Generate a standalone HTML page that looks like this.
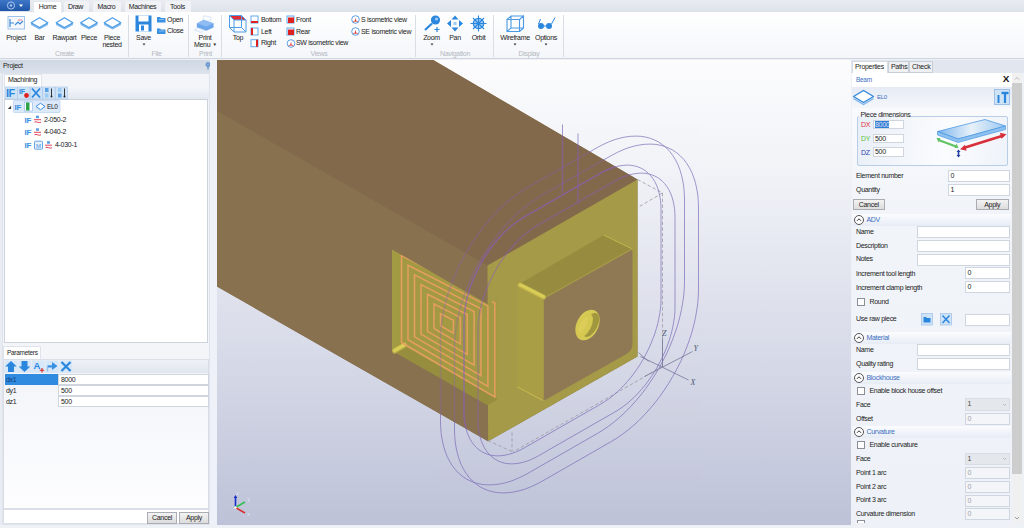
<!DOCTYPE html>
<html><head><meta charset="utf-8"><title>CAD</title>
<style>
html,body{margin:0;padding:0}
body{width:1024px;height:528px;position:relative;overflow:hidden;background:#eef1f6;font-family:"Liberation Sans",sans-serif;font-size:7px;letter-spacing:-0.3px;color:#222}
div{position:absolute;box-sizing:border-box}
.t{height:10px;line-height:10px;white-space:nowrap}
.c{text-align:center}
.g{color:#b4b8c0}
.b{color:#3b6fc0}
.in{background:#fff;border:1px solid #d0d6e0;height:11px;line-height:9px;padding-left:2px;white-space:nowrap}
.dis{background:#f4f5f8;color:#9a9ea6}
.cb{background:#e4e7ec;border:1px solid #d9dde3;color:#444}
.btn{background:linear-gradient(#f3f3f3,#dcdcdc);border:1px solid #a9adb3;text-align:center;line-height:10px;height:12px}
.sep{width:1px;background:#d9dde5;top:15px;height:42px}
.hd{left:852px;width:159px;height:12px;background:linear-gradient(#fbfcfe,#e7ecf5)}
.circ{width:10px;height:10px;border:1px solid #555;border-radius:50%;background:#fff}
.chk{width:8px;height:8px;border:1px solid #8a8f98;background:#fff}
svg{position:absolute;overflow:visible}
</style></head><body>

<div style="left:0;top:0;width:1024px;height:12px;background:linear-gradient(#e9ecf1,#dde2ea)"></div>
<div style="left:0;top:12px;width:1024px;height:47px;background:linear-gradient(#ffffff,#f4f6fa);border-bottom:1px solid #cfd5de"></div>
<div style="left:0;top:0;width:30px;height:11px;background:linear-gradient(#3f77c8,#1f56a8);border-radius:0 0 2px 0"></div>
<svg style="left:0;top:0" width="30" height="11"><circle cx="11" cy="5.5" r="3.6" fill="none" stroke="#a9c7ee" stroke-width="1"/><circle cx="11" cy="5.5" r="1.2" fill="#a9c7ee"/><path d="M19 4.5h4l-2 2.6z" fill="#fff"/></svg>
<div style="left:33px;top:1px;width:29px;height:12px;background:#fff;border:1px solid #e3e7ee;border-bottom:none;border-radius:2px 2px 0 0"></div>
<div style="left:63.5px;top:1px;width:25px;height:11px;background:#f0f2f6;border-radius:2px 2px 0 0"></div>
<div style="left:92.5px;top:1px;width:28px;height:11px;background:#f0f2f6;border-radius:2px 2px 0 0"></div>
<div style="left:124.5px;top:1px;width:36px;height:11px;background:#f0f2f6;border-radius:2px 2px 0 0"></div>
<div style="left:164.5px;top:1px;width:26px;height:11px;background:#f0f2f6;border-radius:2px 2px 0 0"></div>
<div class="t c" style="left:33px;top:1.5px;width:29px;">Home</div>
<div class="t c" style="left:61px;top:1.5px;width:29px;">Draw</div>
<div class="t c" style="left:92px;top:1.5px;width:29px;">Macro</div>
<div class="t c" style="left:123px;top:1.5px;width:39px;">Machines</div>
<div class="t c" style="left:163px;top:1.5px;width:29px;">Tools</div>
<div class="t c" style="left:-14px;top:32.5px;width:60px;">Project</div>
<div class="t c" style="left:9.5px;top:32.5px;width:60px;">Bar</div>
<div class="t c" style="left:34.5px;top:32.5px;width:60px;">Rawpart</div>
<div class="t c" style="left:59px;top:32.5px;width:60px;">Piece</div>
<div class="t c" style="left:82px;top:32.5px;width:60px;">Piece</div>
<div class="t c" style="left:82px;top:39.5px;width:60px;">nested</div>
<div class="t c" style="left:113.5px;top:32.5px;width:60px;">Save</div>
<svg style="left:141.5px;top:42.5px" width="4" height="3"><path d="M.6 .5h2.8L2 2.6z" fill="#333"/></svg>
<div class="t c" style="left:175px;top:32.5px;width:60px;">Print</div>
<div class="t c" style="left:175px;top:39.5px;width:60px;">Menu <span style="font-size:4.5px;position:relative;top:-.500px;left:.500px">&#9660;</span></div>
<div class="t c" style="left:208px;top:32.5px;width:60px;">Top</div>
<div class="t c" style="left:401.5px;top:32.5px;width:60px;">Zoom</div>
<svg style="left:429.5px;top:42.5px" width="4" height="3"><path d="M.6 .5h2.8L2 2.6z" fill="#333"/></svg>
<div class="t c" style="left:425px;top:32.5px;width:60px;">Pan</div>
<div class="t c" style="left:448.5px;top:32.5px;width:60px;">Orbit</div>
<div class="t c" style="left:485px;top:32.5px;width:60px;">Wireframe</div>
<svg style="left:513px;top:42.5px" width="4" height="3"><path d="M.6 .5h2.8L2 2.6z" fill="#333"/></svg>
<div class="t c" style="left:516px;top:32.5px;width:60px;">Options</div>
<svg style="left:544px;top:42.5px" width="4" height="3"><path d="M.6 .5h2.8L2 2.6z" fill="#333"/></svg>
<div class="t c g" style="left:34.5px;top:49px;width:60px;">Create</div>
<div class="t c g" style="left:126.5px;top:49px;width:60px;">File</div>
<div class="t c g" style="left:175.5px;top:49px;width:60px;">Print</div>
<div class="t c g" style="left:289px;top:49px;width:60px;">Views</div>
<div class="t c g" style="left:425px;top:49px;width:60px;">Navigation</div>
<div class="t c g" style="left:499px;top:49px;width:60px;">Display</div>
<div class="sep" style="left:127.5px"></div>
<div class="sep" style="left:188px"></div>
<div class="sep" style="left:221px"></div>
<div class="sep" style="left:415px"></div>
<div class="sep" style="left:492.5px"></div>
<div class="sep" style="left:562.5px"></div>
<div class="t " style="left:167px;top:14.5px;">Open</div>
<div class="t " style="left:167px;top:26.3px;">Close</div>
<div class="t " style="left:261px;top:14.600000000000001px;">Bottom</div>
<div class="t " style="left:261px;top:26.5px;">Left</div>
<div class="t " style="left:261px;top:38.2px;">Right</div>
<div class="t " style="left:296px;top:14.600000000000001px;">Front</div>
<div class="t " style="left:296px;top:26.5px;">Rear</div>
<div class="t " style="left:296px;top:38.2px;">SW isometric view</div>
<div class="t " style="left:361px;top:14.600000000000001px;">S isometric view</div>
<div class="t " style="left:361px;top:26.5px;">SE isometric view</div>
<svg style="left:0;top:0" width="1024" height="60" viewBox="0 0 1024 60">
<rect x="8" y="16.5" width="16.5" height="12.5" fill="#f4f8fd" stroke="#9fc3ea" stroke-width="1"/><path d="M10 19v8M10 23h4M15 25l3-3 2 2 3-3" stroke="#3d8ad8" stroke-width="1.2" fill="none"/><path d="M18 20h4" stroke="#e57a7a" stroke-width="1"/>
<path d="M31.1 22.7L39.5 27.4L47.9 22.7V24.9L39.5 29.6L31.1 24.9Z" fill="#7db7ee"/>
<path d="M31.1 22.7 L39.5 17.8 L47.9 22.7 L39.5 27.4Z" fill="#fdfeff" stroke="#4a9be6" stroke-width="1.1" stroke-linejoin="round"/>
<path d="M56.1 22.7L64.5 27.4L72.9 22.7V24.9L64.5 29.6L56.1 24.9Z" fill="#7db7ee"/>
<path d="M56.1 22.7 L64.5 17.8 L72.9 22.7 L64.5 27.4Z" fill="#fdfeff" stroke="#4a9be6" stroke-width="1.1" stroke-linejoin="round"/>
<path d="M80.6 22.7L89 27.4L97.4 22.7V24.9L89 29.6L80.6 24.9Z" fill="#7db7ee"/>
<path d="M80.6 22.7 L89 17.8 L97.4 22.7 L89 27.4Z" fill="#fdfeff" stroke="#4a9be6" stroke-width="1.1" stroke-linejoin="round"/>
<path d="M104.1 22.7L112.5 27.4L120.9 22.7V24.9L112.5 29.6L104.1 24.9Z" fill="#7db7ee"/>
<path d="M104.1 22.7 L112.5 17.8 L120.9 22.7 L112.5 27.4Z" fill="#fdfeff" stroke="#4a9be6" stroke-width="1.1" stroke-linejoin="round"/>
<path d="M135.5 15.5h16v16h-16z" fill="#2b87dd"/><rect x="138.5" y="15.5" width="10" height="6" fill="#fff"/><rect x="139" y="24.5" width="9.5" height="7" fill="#fff"/><rect x="141" y="25.5" width="3" height="5" fill="#2b87dd"/>
<path d="M157 17h3l1 1h4.5v4.5h-8.5z" fill="#3a90e2"/><path d="M157 28.5h3l1 1h4.5v4.5h-8.5z" fill="#3a90e2"/><path d="M159 19.5h5M159 31h5" stroke="#9ccbf5" stroke-width=".8"/>
<path d="M203 20l.800-4.2 7.2 1.2-.500 4z" fill="#fbfdff" stroke="#c5daf2" stroke-width=".6"/>
<path d="M196.8 23.5l6.5-3.5 10.3 3.2v4.3l-7.3 3.3-9.5-3.3z" fill="#6ea6ec"/>
<path d="M196.8 23.5l6.5-3.5 10.3 3.2-7.3 3.3z" fill="#8fbcf2"/>
<path d="M197.5 27.8l6.8 2.4-3 2.3-7-2.3z" fill="#f2f7fd" stroke="#c5daf2" stroke-width=".6"/>
<path d="M229.5 15.5h12l4.5 4.5h-12z" fill="#e02c34"/><path d="M229.5 15.5h12v12h-12zM234 20h12v12h-12zM229.5 15.5l4.5 4.5M241.5 15.5l4.5 4.5M229.5 27.5l4.5 4.5M241.5 27.5l4.5 4.5" fill="none" stroke="#4f9fe8" stroke-width="1"/>
<rect x="251" y="16" width="7" height="7" fill="#fff" stroke="#62a9ec" stroke-width="1"/>
<rect x="251" y="21" width="7" height="2" fill="#dd2222"/>
<rect x="251" y="28" width="7" height="7" fill="#fff" stroke="#62a9ec" stroke-width="1"/>
<rect x="251" y="28" width="2" height="7" fill="#dd2222"/>
<rect x="251" y="39.7" width="7" height="7" fill="#fff" stroke="#62a9ec" stroke-width="1"/>
<rect x="256" y="39.7" width="2" height="7" fill="#dd2222"/>
<rect x="287" y="16" width="7" height="7" fill="#fff" stroke="#62a9ec" stroke-width="1"/>
<rect x="288" y="17.5" width="6" height="5.5" fill="#dd2222"/>
<rect x="287" y="28" width="7" height="7" fill="#fff" stroke="#62a9ec" stroke-width="1"/>
<rect x="288" y="29.5" width="6" height="5.5" fill="#dd2222"/>
<circle cx="291" cy="43.5" r="3.8" fill="#fff" stroke="#5a9fe6" stroke-width="1"/><path d="M291 42.5v3.5M291 44.5l-2.5 1.5M291 44.5l2.5 1.5" stroke="#d33" stroke-width=".8" fill="none"/>
<circle cx="355.5" cy="19.5" r="3.8" fill="#fff" stroke="#5a9fe6" stroke-width="1"/><path d="M355.5 18.5v3.5M355.5 20.5l-2.5 1.5M355.5 20.5l2.5 1.5" stroke="#d33" stroke-width=".8" fill="none"/>
<circle cx="355.5" cy="31.5" r="3.8" fill="#fff" stroke="#5a9fe6" stroke-width="1"/><path d="M355.5 30.5v3.5M355.5 32.5l-2.5 1.5M355.5 32.5l2.5 1.5" stroke="#d33" stroke-width=".8" fill="none"/>
<circle cx="435.5" cy="20" r="4.6" fill="#2b87dd"/><circle cx="436.5" cy="19" r="1.6" fill="#9ccbf5"/><path d="M432 23.5l-7 6.5" stroke="#2b87dd" stroke-width="2.2"/><path d="M437 27v5M434.5 29.5h5" stroke="#2b87dd" stroke-width="1.2"/>
<path d="M455 15.5l3.5 4h-7zM455 31.5l3.5-4h-7zM447 23.5l4-3.5v7zM463 23.5l-4-3.5v7z" fill="#2b87dd"/><rect x="453.5" y="22" width="3" height="3" fill="#9ccbf5"/>
<circle cx="478.5" cy="23.5" r="5.2" fill="#9ccbf5" stroke="#2b87dd" stroke-width="1.2"/><path d="M478.5 15.5v16M470.5 23.5h16M473 18l11 11M484 18l-11 11" stroke="#2b87dd" stroke-width="1.1"/>
<path d="M507 19.5h12.5v12H507zM519.5 19.5L523.5 16v12l-4 3.5M511 16v12h12.5M511 28l-4 3.5M507 19.5l4-3.5h12.5" fill="none" stroke="#4a9ae6" stroke-width="1.1"/>
<circle cx="541" cy="26" r="3" fill="#2b87dd"/><circle cx="549" cy="26" r="3" fill="#2b87dd"/><path d="M538.5 24l2-5M551.5 24l3.5-6.5M544 26h2" stroke="#2b87dd" stroke-width="1" fill="none"/>
</svg>
<div style="left:0;top:59.5px;width:213px;height:13px;background:linear-gradient(#cfd7e3,#dbe2ec)"></div>
<div class="t " style="left:3px;top:60.5px;">Project</div>
<svg style="left:205px;top:62px" width="6" height="8"><circle cx="3" cy="2.6" r="2" fill="#7fa8dc" stroke="#4d7fc0" stroke-width=".8"/><path d="M3 4.5v3" stroke="#4d7fc0" stroke-width="1"/></svg>
<div style="left:0;top:72.5px;width:213px;height:456px;background:#e9edf3"></div>
<div style="left:2px;top:72.5px;width:208px;height:452px;background:#f3f5f9;border:1px solid #dfe4ec"></div>
<div style="left:4px;top:73.5px;width:38px;height:14px;background:#fff;border:1px solid #dfe4ec;border-bottom:none"></div>
<div class="t " style="left:8px;top:75px;">Machining</div>
<div style="left:4px;top:87px;width:205px;height:12px;background:linear-gradient(#f4f6fa,#e3e8f0)"></div>
<div style="left:4px;top:99px;width:204px;height:244px;background:#fff;border:1px solid #cdd3dd"></div>
<svg style="left:0;top:0" width="216" height="528" viewBox="0 0 216 528">
<rect x="5" y="87" width="12.3" height="12" fill="#cfe3f7" stroke="#a9c6e6" stroke-width=".6"/>
<rect x="17.6" y="87" width="12.3" height="12" fill="#cfe3f7" stroke="#a9c6e6" stroke-width=".6"/>
<rect x="30.2" y="87" width="12.3" height="12" fill="#cfe3f7" stroke="#a9c6e6" stroke-width=".6"/>
<rect x="42.8" y="87" width="12.3" height="12" fill="#cfe3f7" stroke="#a9c6e6" stroke-width=".6"/>
<rect x="55.4" y="87" width="12.3" height="12" fill="#cfe3f7" stroke="#a9c6e6" stroke-width=".6"/>
<text x="6" y="97" font-size="11" font-weight="bold" fill="#2b87dd" letter-spacing="-.5">IF</text>
<text x="19" y="94" font-size="7" font-weight="bold" fill="#2b87dd" letter-spacing="-.3">IF</text><circle cx="26.5" cy="95.5" r="2.4" fill="#e02020"/>
<path d="M32 88.5l8 9M40 88.5l-8 9" stroke="#2b87dd" stroke-width="1.8"/>
<path d="M51.5 88.5v8" stroke="#222" stroke-width=".9"/><circle cx="51.5" cy="96.5" r="1" fill="#222"/><rect x="45" y="88" width="3.5" height="4" fill="#5aa0e6"/><rect x="45" y="93.5" width="3.5" height="4" fill="#9ccbf5"/>
<path d="M64.5 88.5v8" stroke="#222" stroke-width=".9"/><circle cx="64.5" cy="96.5" r="1" fill="#222"/><rect x="58" y="88" width="3.5" height="4" fill="#9ccbf5"/><rect x="58" y="93.5" width="3.5" height="4" fill="#5aa0e6"/>
<path d="M7.8 109l3.3-3.3v3.3z" fill="#333"/>
<rect x="13.5" y="100.5" width="46.5" height="12" rx="1" fill="#dbe9fb" stroke="#b7d0f0" stroke-width=".7"/>
<text x="14.5" y="110" font-size="8" font-weight="bold" fill="#3c8fe0" letter-spacing="-.3">IF</text>
<rect x="24.5" y="102" width="8" height="9" fill="#fff" stroke="#8ab6e6" stroke-width=".6"/><rect x="26" y="102.5" width="3.5" height="8" fill="#2ea44a"/>
<path d="M36 106.5l4.5-3.2 4.5 3.2-4.5 3.2z" fill="#fff" stroke="#3c8fe0" stroke-width="1"/>
<text x="24.5" y="122.7" font-size="8" font-weight="bold" fill="#3c8fe0" letter-spacing="-.3">IF</text>
<rect x="36" y="115.7" width="3" height="2.5" fill="#5aa0e6"/><path d="M34 119.7h7M34.5 122.2c2-1.5 4 1.5 6.5 0" stroke="#e0425a" stroke-width="1" fill="none"/>
<text x="24.5" y="135.3" font-size="8" font-weight="bold" fill="#3c8fe0" letter-spacing="-.3">IF</text>
<rect x="36" y="128.3" width="3" height="2.5" fill="#5aa0e6"/><path d="M34 132.3h7M34.5 134.8c2-1.5 4 1.5 6.5 0" stroke="#e0425a" stroke-width="1" fill="none"/>
<text x="24.5" y="148.2" font-size="8" font-weight="bold" fill="#3c8fe0" letter-spacing="-.3">IF</text>
<rect x="47" y="141.2" width="3" height="2.5" fill="#5aa0e6"/><path d="M45 145.2h7M45.5 147.7c2-1.5 4 1.5 6.5 0" stroke="#e0425a" stroke-width="1" fill="none"/>
<rect x="34.5" y="141.2" width="8" height="8" rx="1" fill="#eaf3fd" stroke="#3c8fe0" stroke-width=".8"/><text x="36" y="147.7" font-size="6" fill="#3c8fe0">M</text>
</svg>
<div class="t " style="left:47px;top:101.5px;font-size:6.5px">EL0</div>
<div class="t " style="left:44px;top:114.7px;">2-050-2</div>
<div class="t " style="left:44px;top:127.30000000000001px;">4-040-2</div>
<div class="t " style="left:55px;top:140.2px;">4-030-1</div>
<div style="left:3px;top:346px;width:38px;height:13px;background:#fff;border:1px solid #dfe4ec;border-bottom:none"></div>
<div class="t " style="left:7px;top:347.5px;font-size:6.5px">Parameters</div>
<div style="left:3px;top:359px;width:206px;height:150px;background:linear-gradient(#f1f4f9,#fdfdfe);border:1px solid #d9dee7"></div>
<div style="left:4px;top:360px;width:204px;height:13px;background:linear-gradient(#eef1f6,#e1e6ee)"></div>
<div style="left:3px;top:509px;width:206px;height:15px;background:#fff;border:1px solid #d9dee7"></div>
<div style="left:5px;top:373.5px;width:53px;height:11px;background:#2f8be0"></div>
<div class="t " style="left:6px;top:374.5px;color:#173a78">dx1</div>
<div class="t " style="left:6px;top:385.5px;">dy1</div>
<div class="t " style="left:6px;top:396.5px;">dz1</div>
<div class="in" style="left:58px;top:373.5px;width:150.5px;height:11px">8000</div>
<div class="in" style="left:58px;top:384.5px;width:150.5px;height:11px">500</div>
<div class="in" style="left:58px;top:395.5px;width:150.5px;height:11px">500</div>
<svg style="left:0;top:355px" width="216" height="20" viewBox="0 355 216 20">
<rect x="5" y="360.5" width="12.5" height="12" fill="#d6e7f9"/>
<rect x="18.5" y="360.5" width="12.5" height="12" fill="#d6e7f9"/>
<rect x="32" y="360.5" width="12.5" height="12" fill="#d6e7f9"/>
<rect x="45.5" y="360.5" width="12.5" height="12" fill="#d6e7f9"/>
<rect x="59.5" y="360.5" width="12.5" height="12" fill="#d6e7f9"/>
<path d="M11 361l5.8 5.5h-2.8v5.5h-6v-5.5h-2.8z" fill="#2b87dd"/>
<path d="M24.5 372l5.8-5.5h-2.8v-5.5h-6v5.5h-2.8z" fill="#2b87dd"/>
<text x="33.5" y="369" font-size="9.5" font-weight="bold" fill="#2b87dd">A</text><path d="M42 368v4.4M39.8 370.2h4.4" stroke="#d22" stroke-width="1.1"/>
<path d="M47.5 371.5v-5.5h5" stroke="#8fc0f0" stroke-width="1.3" fill="none"/><path d="M52 362l5.5 4-5.5 4z" fill="#3a90e2"/><path d="M48 366.5h5" stroke="#3a90e2" stroke-width="2"/>
<path d="M61.5 362l9 9M70.5 362l-9 9" stroke="#2b87dd" stroke-width="2.2"/>
</svg>
<div class="btn" style="left:147px;top:511.5px;width:30px">Cancel</div>
<div class="btn" style="left:179px;top:511.5px;width:30px">Apply</div>
<div style="left:210px;top:59.5px;width:7px;height:469px;background:#eef1f7"></div>
<div style="left:216.5px;top:59.5px;width:634.5px;height:465px;background:linear-gradient(#fcfcfd 0%,#f0f2f7 25%,#d9dce9 60%,#bec2d8 100%)"></div>
<div style="left:0px;top:524.5px;width:1024px;height:4px;background:#eef1f6"></div>
<svg style="left:216.5px;top:59.5px" width="634.5" height="465" viewBox="216.5 59.5 634.5 465">
<defs><clipPath id="vp"><rect x="216.5" y="59.5" width="634.5" height="465"/></clipPath>
<clipPath id="pk"><polygon points="391.5,249 487,303.6 497,297.9 497,398.9 487,404.6 391.5,350"/></clipPath>
<linearGradient id="hl" x1="0" y1="0" x2="1" y2="0"><stop offset="0" stop-color="#b9ab45"/><stop offset=".5" stop-color="#e2d45a"/><stop offset="1" stop-color="#a89c44"/></linearGradient>
<radialGradient id="hole" cx=".3" cy=".55" r=".8"><stop offset="0" stop-color="#e4d25a"/><stop offset=".6" stop-color="#c6b547"/><stop offset="1" stop-color="#9c8f3d"/></radialGradient>
<clipPath id="inb"><polygon points="216.5,59.5 432.7,59.5 637,179 637,356 487.6,440.8 216.5,286"/></clipPath>
<clipPath id="outb"><path clip-rule="evenodd" d="M216.5 59.5H851V524.5H216.5Z M216.5 59.5 L432.7 59.5 L637 179 L637 356 L487.6 440.8 L216.5 286Z"/></clipPath>
</defs>
<g clip-path="url(#vp)">
<polygon points="216.5,59.5 432.7,59.5 637,179 637,356 487.6,440.8 216.5,286" fill="#88714f"/>
<polygon points="216.5,59.5 432.7,59.5 637,179 487,265 216.5,110.4" fill="#83694c"/>
<polygon points="216.5,110.9 487,265.5 487.6,440.8 216.5,286" fill="#88714f"/>
<polygon points="487,265 637,179 637,356 487.6,440.8" fill="#a59a47"/>
<polygon points="391.5,249 487,303.6 497,297.9 497,398.9 487,404.6 391.5,350" fill="#a39a44"/>
<polygon points="391.5,350 487,404.6 497,398.9 401.5,344.3" fill="#978d3f"/>
<path d="M394.2 350.3L404 344.6" stroke="#b4a946" stroke-width="5.6" stroke-linecap="round"/><path d="M394.2 350L404 344.3" stroke="#d9cd58" stroke-width="3.6" stroke-linecap="round"/>
<g clip-path="url(#pk)" fill="none" stroke="#eb9f63" stroke-width="1.55" opacity=".9">
<polygon points="401,255 494.3,302.5 494.3,396.5 401,342"/>
<polygon points="407.5,264.7 487.4,305.4 487.4,385.9 407.5,339.2"/>
<polygon points="414,274.4 480.5,308.2 480.5,375.2 414,336.4"/>
<polygon points="420.5,284.1 473.6,311.1 473.6,364.6 420.5,333.6"/>
<polygon points="427,293.8 466.7,314 466.7,354 427,330.8"/>
<polygon points="433.5,303.5 459.8,316.9 459.8,343.4 433.5,328"/>
<polygon points="440,313.2 452.9,319.7 452.9,332.7 440,325.2"/>
</g>
<polygon points="518,284 603.5,234.5 631.6,248.2 544,298" fill="#968b3e"/>
<polygon points="517,284.5 543,298 543,400 517,386.5" fill="#a99e46"/>
<path d="M545.5 296.8 L629.5 249.5 Q632 248.3 632 251 L632 343 Q632 350 626 353.4 L546 398.8 Q542.5 400.8 542.5 397 L542.5 300.5 Q542.5 298.5 545.5 296.8Z" fill="#8f7955"/>
<path d="M519.5 284.6L543 296.6" stroke="#b9ad49" stroke-width="5.2" stroke-linecap="round"/><path d="M519.8 284.4L543 296.2" stroke="#d9cd57" stroke-width="3.2" stroke-linecap="round"/>
<path d="M546 296.3L631 248.8" stroke="#a79c47" stroke-width="1.2"/><path d="M603.5 234.7L631.3 248.2" stroke="#c2b650" stroke-width="1"/>
<path d="M542.8 300L542.8 398" stroke="#a59a48" stroke-width="1.2"/>
<path d="M517 386.5L542.5 400" stroke="#c8bb50" stroke-width="1"/>
<g transform="translate(587,324.5) rotate(27)"><ellipse rx="10.8" ry="16.3" fill="#d6ca54"/><ellipse cx="2.8" cy="-1.5" rx="6.8" ry="13" fill="#a1973f"/><ellipse cx="-2.2" cy="1.8" rx="6.4" ry="13" fill="#d4c851"/><ellipse cx="-4" cy="2" rx="3.2" ry="9" fill="#ddcd5a" opacity=".8"/></g>
<g fill="none" stroke="#9a9aa4" stroke-width=".8" stroke-dasharray="3.5 2.2">
<path d="M637 179L662 192.5L638 206.5"/><path d="M662 192.5V366"/><path d="M662 366L512.5 451.5"/><path d="M487.5 440L512.5 451.5"/><path d="M511.5 432V451"/>
</g>
<g fill="none" stroke="#7868b6" stroke-width=".85" opacity=".8" clip-path="url(#outb)"><path d="M596.7 147.1 L602.4 144.1 L608.1 141.5 L613.7 139.3 L619.3 137.7 L624.8 136.5 L630.1 135.8 L635.3 135.6 L640.4 135.8 L645.2 136.6 L649.8 137.8 L654.3 139.6 L658.4 141.7 L662.3 144.4 L666 147.5 L669.3 151 L672.3 155 L675 159.4 L677.4 164.1 L679.4 169.3 L681 174.7 L682.3 180.5 L683.3 186.6 L683.8 192.9 L684 199.5 L684 280.7 L683.8 287.5 L683.3 294.5 L682.3 301.6 L681 308.9 L679.4 316.2 L677.4 323.7 L675 331.1 L672.3 338.6 L669.3 346 L666 353.4 L662.3 360.6 L658.4 367.7 L654.3 374.7 L649.8 381.5 L645.2 388.1 L640.4 394.4 L635.3 400.4 L630.1 406.2 L624.8 411.6 L619.3 416.7 L613.7 421.4 L608.1 425.7 L602.4 429.6 L596.7 433.1 L527.3 472.9 L521.6 475.9 L515.9 478.5 L510.3 480.7 L504.7 482.3 L499.2 483.5 L493.9 484.2 L488.7 484.4 L483.7 484.2 L478.8 483.4 L474.2 482.2 L469.7 480.4 L465.6 478.3 L461.7 475.6 L458 472.5 L454.7 469 L451.7 465 L449 460.6 L446.6 455.9 L444.6 450.7 L443 445.3 L441.7 439.5 L440.7 433.4 L440.2 427.1 L440 420.5 L440 339.3 L440.2 332.5 L440.7 325.5 L441.7 318.4 L443 311.1 L444.6 303.8 L446.6 296.3 L449 288.9 L451.7 281.4 L454.7 274 L458 266.6 L461.7 259.4 L465.6 252.3 L469.7 245.3 L474.2 238.5 L478.8 231.9 L483.7 225.6 L488.7 219.6 L493.9 213.8 L499.2 208.4 L504.7 203.3 L510.3 198.6 L515.9 194.3 L521.6 190.4 L527.3 186.9Z"/><path d="M600.2 172.6 L604.1 170.5 L608.1 168.7 L612 167.2 L615.8 166.1 L619.6 165.3 L623.3 164.8 L626.9 164.6 L630.4 164.8 L633.7 165.3 L636.9 166.2 L640 167.4 L642.8 168.9 L645.5 170.7 L648 172.9 L650.3 175.3 L652.4 178.1 L654.3 181.1 L655.9 184.4 L657.3 187.9 L658.4 191.7 L659.3 195.7 L660 199.9 L660.4 204.3 L660.5 208.8 L660.5 298.3 L660.4 303 L660 307.8 L659.3 312.8 L658.4 317.8 L657.3 322.9 L655.9 328 L654.3 333.2 L652.4 338.3 L650.3 343.4 L648 348.5 L645.5 353.5 L642.8 358.5 L640 363.3 L636.9 368 L633.7 372.5 L630.4 376.9 L626.9 381 L623.3 385 L619.6 388.8 L615.8 392.3 L612 395.5 L608.1 398.5 L604.1 401.2 L600.2 403.6 L523.8 447.4 L519.9 449.5 L515.9 451.3 L512 452.8 L508.2 453.9 L504.4 454.7 L500.7 455.2 L497.1 455.4 L493.6 455.2 L490.3 454.7 L487.1 453.8 L484 452.6 L481.2 451.1 L478.5 449.3 L476 447.1 L473.7 444.7 L471.6 441.9 L469.7 438.9 L468.1 435.6 L466.7 432.1 L465.6 428.3 L464.7 424.3 L464 420.1 L463.6 415.7 L463.5 411.2 L463.5 321.7 L463.6 317 L464 312.2 L464.7 307.2 L465.6 302.2 L466.7 297.1 L468.1 292 L469.7 286.8 L471.6 281.7 L473.7 276.6 L476 271.5 L478.5 266.5 L481.2 261.5 L484 256.7 L487.1 252 L490.3 247.5 L493.6 243.1 L497.1 239 L500.7 235 L504.4 231.2 L508.2 227.7 L512 224.5 L515.9 221.5 L519.9 218.8 L523.8 216.4Z"/><path d="M610.7 155.1 L616.4 152.1 L622.1 149.5 L627.7 147.3 L633.3 145.7 L638.8 144.5 L644.1 143.8 L649.3 143.6 L654.4 143.8 L659.2 144.6 L663.8 145.8 L668.3 147.6 L672.4 149.7 L676.3 152.4 L680 155.5 L683.3 159 L686.3 163 L689 167.4 L691.4 172.1 L693.4 177.3 L695 182.7 L696.3 188.5 L697.3 194.6 L697.8 200.9 L698 207.5 L698 288.7 L697.8 295.5 L697.3 302.5 L696.3 309.6 L695 316.9 L693.4 324.2 L691.4 331.7 L689 339.1 L686.3 346.6 L683.3 354 L680 361.4 L676.3 368.6 L672.4 375.7 L668.3 382.7 L663.8 389.5 L659.2 396.1 L654.4 402.4 L649.3 408.4 L644.1 414.2 L638.8 419.6 L633.3 424.7 L627.7 429.4 L622.1 433.7 L616.4 437.6 L610.7 441.1 L541.3 480.9 L535.6 483.9 L529.9 486.5 L524.3 488.7 L518.7 490.3 L513.2 491.5 L507.9 492.2 L502.7 492.4 L497.7 492.2 L492.8 491.4 L488.2 490.2 L483.7 488.4 L479.6 486.3 L475.7 483.6 L472 480.5 L468.7 477 L465.7 473 L463 468.6 L460.6 463.9 L458.6 458.7 L457 453.3 L455.7 447.5 L454.7 441.4 L454.2 435.1 L454 428.5 L454 347.3 L454.2 340.5 L454.7 333.5 L455.7 326.4 L457 319.1 L458.6 311.8 L460.6 304.3 L463 296.9 L465.7 289.4 L468.7 282 L472 274.6 L475.7 267.4 L479.6 260.3 L483.7 253.3 L488.2 246.5 L492.8 239.9 L497.7 233.6 L502.7 227.6 L507.9 221.8 L513.2 216.4 L518.7 211.3 L524.3 206.6 L529.9 202.3 L535.6 198.4 L541.3 194.9Z"/><path d="M614.2 180.6 L618.1 178.5 L622.1 176.7 L626 175.2 L629.8 174.1 L633.6 173.3 L637.3 172.8 L640.9 172.6 L644.4 172.8 L647.7 173.3 L650.9 174.2 L654 175.4 L656.8 176.9 L659.5 178.7 L662 180.9 L664.3 183.3 L666.4 186.1 L668.3 189.1 L669.9 192.4 L671.3 195.9 L672.4 199.7 L673.3 203.7 L674 207.9 L674.4 212.3 L674.5 216.8 L674.5 306.3 L674.4 311 L674 315.8 L673.3 320.8 L672.4 325.8 L671.3 330.9 L669.9 336 L668.3 341.2 L666.4 346.3 L664.3 351.4 L662 356.5 L659.5 361.5 L656.8 366.5 L654 371.3 L650.9 376 L647.7 380.5 L644.4 384.9 L640.9 389 L637.3 393 L633.6 396.8 L629.8 400.3 L626 403.5 L622.1 406.5 L618.1 409.2 L614.2 411.6 L537.8 455.4 L533.9 457.5 L529.9 459.3 L526 460.8 L522.2 461.9 L518.4 462.7 L514.7 463.2 L511.1 463.4 L507.6 463.2 L504.3 462.7 L501.1 461.8 L498 460.6 L495.2 459.1 L492.5 457.3 L490 455.1 L487.7 452.7 L485.6 449.9 L483.7 446.9 L482.1 443.6 L480.7 440.1 L479.6 436.3 L478.7 432.3 L478 428.1 L477.6 423.7 L477.5 419.2 L477.5 329.7 L477.6 325 L478 320.2 L478.7 315.2 L479.6 310.2 L480.7 305.1 L482.1 300 L483.7 294.8 L485.6 289.7 L487.7 284.6 L490 279.5 L492.5 274.5 L495.2 269.5 L498 264.7 L501.1 260 L504.3 255.5 L507.6 251.1 L511.1 247 L514.7 243 L518.4 239.2 L522.2 235.7 L526 232.5 L529.9 229.5 L533.9 226.8 L537.8 224.4Z"/><path d="M562 124V193"/><path d="M577.5 133V203"/></g>
<g fill="none" stroke="#8a5cc4" stroke-width="1.5" clip-path="url(#inb)"><path opacity="0.3" d="M596.7 147.1 L602.4 144.1 L608.1 141.5 L613.7 139.3 L619.3 137.7 L624.8 136.5 L630.1 135.8 L635.3 135.6 L640.4 135.8 L645.2 136.6 L649.8 137.8 L654.3 139.6 L658.4 141.7 L662.3 144.4 L666 147.5 L669.3 151 L672.3 155 L675 159.4 L677.4 164.1 L679.4 169.3 L681 174.7 L682.3 180.5 L683.3 186.6 L683.8 192.9 L684 199.5 L684 280.7 L683.8 287.5 L683.3 294.5 L682.3 301.6 L681 308.9 L679.4 316.2 L677.4 323.7 L675 331.1 L672.3 338.6 L669.3 346 L666 353.4 L662.3 360.6 L658.4 367.7 L654.3 374.7 L649.8 381.5 L645.2 388.1 L640.4 394.4 L635.3 400.4 L630.1 406.2 L624.8 411.6 L619.3 416.7 L613.7 421.4 L608.1 425.7 L602.4 429.6 L596.7 433.1 L527.3 472.9 L521.6 475.9 L515.9 478.5 L510.3 480.7 L504.7 482.3 L499.2 483.5 L493.9 484.2 L488.7 484.4 L483.7 484.2 L478.8 483.4 L474.2 482.2 L469.7 480.4 L465.6 478.3 L461.7 475.6 L458 472.5 L454.7 469 L451.7 465 L449 460.6 L446.6 455.9 L444.6 450.7 L443 445.3 L441.7 439.5 L440.7 433.4 L440.2 427.1 L440 420.5 L440 339.3 L440.2 332.5 L440.7 325.5 L441.7 318.4 L443 311.1 L444.6 303.8 L446.6 296.3 L449 288.9 L451.7 281.4 L454.7 274 L458 266.6 L461.7 259.4 L465.6 252.3 L469.7 245.3 L474.2 238.5 L478.8 231.9 L483.7 225.6 L488.7 219.6 L493.9 213.8 L499.2 208.4 L504.7 203.3 L510.3 198.6 L515.9 194.3 L521.6 190.4 L527.3 186.9Z"/><path opacity="0.62" d="M600.2 172.6 L604.1 170.5 L608.1 168.7 L612 167.2 L615.8 166.1 L619.6 165.3 L623.3 164.8 L626.9 164.6 L630.4 164.8 L633.7 165.3 L636.9 166.2 L640 167.4 L642.8 168.9 L645.5 170.7 L648 172.9 L650.3 175.3 L652.4 178.1 L654.3 181.1 L655.9 184.4 L657.3 187.9 L658.4 191.7 L659.3 195.7 L660 199.9 L660.4 204.3 L660.5 208.8 L660.5 298.3 L660.4 303 L660 307.8 L659.3 312.8 L658.4 317.8 L657.3 322.9 L655.9 328 L654.3 333.2 L652.4 338.3 L650.3 343.4 L648 348.5 L645.5 353.5 L642.8 358.5 L640 363.3 L636.9 368 L633.7 372.5 L630.4 376.9 L626.9 381 L623.3 385 L619.6 388.8 L615.8 392.3 L612 395.5 L608.1 398.5 L604.1 401.2 L600.2 403.6 L523.8 447.4 L519.9 449.5 L515.9 451.3 L512 452.8 L508.2 453.9 L504.4 454.7 L500.7 455.2 L497.1 455.4 L493.6 455.2 L490.3 454.7 L487.1 453.8 L484 452.6 L481.2 451.1 L478.5 449.3 L476 447.1 L473.7 444.7 L471.6 441.9 L469.7 438.9 L468.1 435.6 L466.7 432.1 L465.6 428.3 L464.7 424.3 L464 420.1 L463.6 415.7 L463.5 411.2 L463.5 321.7 L463.6 317 L464 312.2 L464.7 307.2 L465.6 302.2 L466.7 297.1 L468.1 292 L469.7 286.8 L471.6 281.7 L473.7 276.6 L476 271.5 L478.5 266.5 L481.2 261.5 L484 256.7 L487.1 252 L490.3 247.5 L493.6 243.1 L497.1 239 L500.7 235 L504.4 231.2 L508.2 227.7 L512 224.5 L515.9 221.5 L519.9 218.8 L523.8 216.4Z"/><path opacity="0.3" d="M610.7 155.1 L616.4 152.1 L622.1 149.5 L627.7 147.3 L633.3 145.7 L638.8 144.5 L644.1 143.8 L649.3 143.6 L654.4 143.8 L659.2 144.6 L663.8 145.8 L668.3 147.6 L672.4 149.7 L676.3 152.4 L680 155.5 L683.3 159 L686.3 163 L689 167.4 L691.4 172.1 L693.4 177.3 L695 182.7 L696.3 188.5 L697.3 194.6 L697.8 200.9 L698 207.5 L698 288.7 L697.8 295.5 L697.3 302.5 L696.3 309.6 L695 316.9 L693.4 324.2 L691.4 331.7 L689 339.1 L686.3 346.6 L683.3 354 L680 361.4 L676.3 368.6 L672.4 375.7 L668.3 382.7 L663.8 389.5 L659.2 396.1 L654.4 402.4 L649.3 408.4 L644.1 414.2 L638.8 419.6 L633.3 424.7 L627.7 429.4 L622.1 433.7 L616.4 437.6 L610.7 441.1 L541.3 480.9 L535.6 483.9 L529.9 486.5 L524.3 488.7 L518.7 490.3 L513.2 491.5 L507.9 492.2 L502.7 492.4 L497.7 492.2 L492.8 491.4 L488.2 490.2 L483.7 488.4 L479.6 486.3 L475.7 483.6 L472 480.5 L468.7 477 L465.7 473 L463 468.6 L460.6 463.9 L458.6 458.7 L457 453.3 L455.7 447.5 L454.7 441.4 L454.2 435.1 L454 428.5 L454 347.3 L454.2 340.5 L454.7 333.5 L455.7 326.4 L457 319.1 L458.6 311.8 L460.6 304.3 L463 296.9 L465.7 289.4 L468.7 282 L472 274.6 L475.7 267.4 L479.6 260.3 L483.7 253.3 L488.2 246.5 L492.8 239.9 L497.7 233.6 L502.7 227.6 L507.9 221.8 L513.2 216.4 L518.7 211.3 L524.3 206.6 L529.9 202.3 L535.6 198.4 L541.3 194.9Z"/><path opacity="0.4" d="M614.2 180.6 L618.1 178.5 L622.1 176.7 L626 175.2 L629.8 174.1 L633.6 173.3 L637.3 172.8 L640.9 172.6 L644.4 172.8 L647.7 173.3 L650.9 174.2 L654 175.4 L656.8 176.9 L659.5 178.7 L662 180.9 L664.3 183.3 L666.4 186.1 L668.3 189.1 L669.9 192.4 L671.3 195.9 L672.4 199.7 L673.3 203.7 L674 207.9 L674.4 212.3 L674.5 216.8 L674.5 306.3 L674.4 311 L674 315.8 L673.3 320.8 L672.4 325.8 L671.3 330.9 L669.9 336 L668.3 341.2 L666.4 346.3 L664.3 351.4 L662 356.5 L659.5 361.5 L656.8 366.5 L654 371.3 L650.9 376 L647.7 380.5 L644.4 384.9 L640.9 389 L637.3 393 L633.6 396.8 L629.8 400.3 L626 403.5 L622.1 406.5 L618.1 409.2 L614.2 411.6 L537.8 455.4 L533.9 457.5 L529.9 459.3 L526 460.8 L522.2 461.9 L518.4 462.7 L514.7 463.2 L511.1 463.4 L507.6 463.2 L504.3 462.7 L501.1 461.8 L498 460.6 L495.2 459.1 L492.5 457.3 L490 455.1 L487.7 452.7 L485.6 449.9 L483.7 446.9 L482.1 443.6 L480.7 440.1 L479.6 436.3 L478.7 432.3 L478 428.1 L477.6 423.7 L477.5 419.2 L477.5 329.7 L477.6 325 L478 320.2 L478.7 315.2 L479.6 310.2 L480.7 305.1 L482.1 300 L483.7 294.8 L485.6 289.7 L487.7 284.6 L490 279.5 L492.5 274.5 L495.2 269.5 L498 264.7 L501.1 260 L504.3 255.5 L507.6 251.1 L511.1 247 L514.7 243 L518.4 239.2 L522.2 235.7 L526 232.5 L529.9 229.5 L533.9 226.8 L537.8 224.4Z"/><path opacity="0.45" d="M562 124V193"/><path opacity="0.45" d="M577.5 133V203"/></g>
<g fill="none" stroke="#77779a" stroke-width=".8"><path d="M662 366V338"/><path d="M640 356L688 379.5"/><path d="M644 376L692 351"/><path d="M638 352L648 361"/></g>
<g font-family="Liberation Serif,serif" font-size="8" fill="#4c5c74" font-style="italic"><text x="661.5" y="335">Z</text><text x="693" y="350.5">Y</text><text x="690" y="384.5">X</text></g>
<path d="M235 507V497" stroke="#1830c8" stroke-width="1.6"/><path d="M235 494.5l1.8 3h-3.6z" fill="#1830c8"/>
<path d="M235 507L244.5 501.5" stroke="#30c050" stroke-width="1.6"/><path d="M235 507L244.5 512.5" stroke="#d83030" stroke-width="1.6"/><circle cx="235" cy="507" r="1.2" fill="#fff"/>
<g font-size="4.5" fill="#e8e8f4"><text x="236" y="494">z</text><text x="247" y="500">y</text><text x="247" y="515">x</text></g>
</g></svg>
<div style="left:851px;top:59.5px;width:173px;height:469px;background:#eef1f6"></div>
<div style="left:851px;top:59.5px;width:173px;height:13.5px;background:#e2e7ef"></div>
<div style="left:852px;top:72.5px;width:159.5px;height:450px;background:linear-gradient(#fbfcfe,#f1f4f9 30%,#eef2f8)"></div>
<div style="left:852px;top:60.5px;width:36px;height:12.5px;background:#fff;border:1px solid #d5dae2;border-bottom:none"></div>
<div style="left:888px;top:61px;width:20.5px;height:11.5px;background:#eef0f4;border:1px solid #c9ced7"></div>
<div style="left:909px;top:61px;width:23.5px;height:11.5px;background:#eef0f4;border:1px solid #c9ced7"></div>
<div class="t " style="left:855px;top:61.5px;">Properties</div>
<div class="t " style="left:891px;top:61.5px;">Paths</div>
<div class="t " style="left:912px;top:61.5px;">Check</div>
<div style="left:852px;top:73px;width:159.5px;height:14px;background:#fff"></div>
<div class="t b" style="left:856px;top:75px;font-size:6.5px">Beam</div>
<div style="left:852px;top:87px;width:159.5px;height:21px;background:linear-gradient(#e6ebf4,#f4f6fa)"></div>
<div class="t b" style="left:877px;top:92px;font-size:6px">EL0</div>
<div class="t " style="left:1002.5px;top:73.8px;font-size:9px;font-weight:bold;color:#111;letter-spacing:0;transform:scaleX(1.1)">X</div>
<div style="left:1012px;top:73px;width:9.5px;height:450px;background:#f0f0f0"></div>
<div style="left:1012px;top:83px;width:9.5px;height:391px;background:#cdcdcd"></div>
<svg style="left:1012px;top:73px" width="10" height="450"><path d="M3 6.5l2-2 2 2" stroke="#aaa" fill="none" stroke-width=".8"/><path d="M3 444l2 2 2-2" stroke="#888" fill="none" stroke-width=".8"/></svg>
<div style="left:994px;top:89px;width:15.5px;height:15.5px;background:#cfe3f7;border:1px solid #9fc0e6"></div>
<svg style="left:994px;top:89px" width="16" height="16"><path d="M4.5 6v8" stroke="#2b87dd" stroke-width="2"/><path d="M7.5 4h7" stroke="#2b87dd" stroke-width="2.4"/><path d="M11 4v10" stroke="#2b87dd" stroke-width="2.2"/></svg>
<div style="left:856.5px;top:115.5px;width:151.5px;height:50px;border:1px solid #b9cde6;border-radius:2px;background:linear-gradient(100deg,#e9eff8,#fbfcfe 60%,#eef3fa)"></div>
<div style="left:859px;top:114px;width:50px;height:3px;background:#f4f6fa"></div>
<div class="t " style="left:860.5px;top:110px;">Piece dimensions</div>
<div class="t " style="left:861px;top:120px;color:#e0303a">DX</div>
<div class="t " style="left:861px;top:133.5px;color:#5cc040">DY</div>
<div class="t " style="left:861px;top:147.5px;color:#3040b0">DZ</div>
<div class="in" style="left:872.5px;top:120px;width:31px;height:9px;line-height:7px;padding-left:1.5px"><span style="background:#2f7fd8;color:#dde">8000</span></div>
<div class="in" style="left:872.5px;top:133.5px;width:31px;height:9px;line-height:7px;padding-left:1.5px">500</div>
<div class="in" style="left:872.5px;top:147px;width:31px;height:9.5px;line-height:7.5px;padding-left:1.5px">500</div>
<svg style="left:851px;top:59px" width="173" height="469" viewBox="851 59 173 469">
<defs><linearGradient id="sl" x1="0" x2="1"><stop offset="0" stop-color="#7db6ec"/><stop offset=".5" stop-color="#e8f1fa"/><stop offset="1" stop-color="#9cc8f2"/></linearGradient></defs>
<path d="M937.5 131.5L985 119.5 1005.5 126 958 139z" fill="url(#sl)" stroke="#3d90e0" stroke-width=".7"/><path d="M937.5 131.5v3.5L958 142.5 1005.5 129.5V126L958 139z" fill="#8ec0f0" stroke="#3d90e0" stroke-width=".6"/>
<path d="M938.5 140l17.5 6.5" stroke="#62c466" stroke-width="2.4"/><path d="M936.5 138l4 0-2 4.5zM958.5 148l-4 0 2-4.5z" fill="#62c466"/>
<path d="M963.5 148l40-12.5" stroke="#d8303a" stroke-width="2.8"/><path d="M960 149.2l5-4.5 1.6 6zM1006.5 134.3l-5 4.5-1.6-6z" fill="#d8303a"/>
<path d="M958.5 151.5v4" stroke="#2040a0" stroke-width="1.6"/><path d="M958.5 149.5l2 2.5h-4zM958.5 157.5l2-2.5h-4z" fill="#2040a0"/>
<path d="M853.5 96.5l10-6 10 6-10 6z" fill="#fdfefe" stroke="#2f86db" stroke-width="1.3" stroke-linejoin="round"/><path d="M853.5 98.5l10 6 10-6" fill="none" stroke="#7ab3ea" stroke-width="1.2"/>
<rect x="921.5" y="313.5" width="11" height="11.5" fill="#cfe3f7" stroke="#9fc0e6" stroke-width=".7"/><path d="M923.5 317h2.5l1 1h3.5v4.5h-7z" fill="#2b87dd"/>
<rect x="940.5" y="313.5" width="11" height="11.5" fill="#cfe3f7" stroke="#9fc0e6" stroke-width=".7"/><path d="M942.5 315.5l7 7.5M949.5 315.5l-7 7.5" stroke="#2b87dd" stroke-width="1.5"/>
</svg>
<div class="t " style="left:856px;top:171px;">Element number</div>
<div class="in" style="left:947.5px;top:170px;width:62px;height:11.5px;line-height:9.5px">0</div>
<div class="t " style="left:856px;top:185px;">Quantity</div>
<div class="in" style="left:947.5px;top:183.5px;width:62px;height:12px;line-height:10px">1</div>
<div class="btn" style="left:853px;top:199px;width:31.5px;height:11px;line-height:9px">Cancel</div>
<div class="btn" style="left:976px;top:199px;width:32.5px;height:11px;line-height:9px">Apply</div>
<div class="hd" style="top:213.5px"></div>
<div class="circ" style="left:854.2px;top:214.5px"></div>
<svg style="left:854.2px;top:214.5px" width="10" height="10"><path d="M3 5.8l2-2 2 2" stroke="#333" stroke-width="1" fill="none"/></svg>
<div class="t b" style="left:866.5px;top:214.5px;">ADV</div>
<div class="t " style="left:856px;top:226.5px;">Name</div>
<div class="in" style="left:917px;top:225.5px;width:92.5px;height:12px;line-height:10px"></div>
<div class="t " style="left:856px;top:240.5px;">Description</div>
<div class="in" style="left:917px;top:239.5px;width:92.5px;height:12px;line-height:10px"></div>
<div class="t " style="left:856px;top:254px;">Notes</div>
<div class="in" style="left:917px;top:253.5px;width:92.5px;height:12px;line-height:10px"></div>
<div class="t " style="left:856px;top:268.5px;">Increment tool length</div>
<div class="in" style="left:964.5px;top:267px;width:45px;height:12px;line-height:10px">0</div>
<div class="t " style="left:856px;top:282.5px;">Increment clamp length</div>
<div class="in" style="left:964.5px;top:281px;width:45px;height:12px;line-height:10px">0</div>
<div class="chk" style="left:857px;top:297.5px"></div>
<div class="t " style="left:869.5px;top:296.5px;">Round</div>
<div class="t " style="left:856px;top:313.5px;">Use raw piece</div>
<div class="in" style="left:964.5px;top:314px;width:45px;height:11.5px;line-height:9.5px"></div>
<div class="hd" style="top:331.5px"></div>
<div class="circ" style="left:854.2px;top:332.5px"></div>
<svg style="left:854.2px;top:332.5px" width="10" height="10"><path d="M3 5.8l2-2 2 2" stroke="#333" stroke-width="1" fill="none"/></svg>
<div class="t b" style="left:866.5px;top:332.5px;">Material</div>
<div class="t " style="left:856px;top:345px;">Name</div>
<div class="in" style="left:917px;top:344px;width:92.5px;height:12px;line-height:10px"></div>
<div class="t " style="left:856px;top:359px;">Quality rating</div>
<div class="in" style="left:917px;top:358px;width:92.5px;height:12px;line-height:10px"></div>
<div class="hd" style="top:371.5px"></div>
<div class="circ" style="left:854.2px;top:372.5px"></div>
<svg style="left:854.2px;top:372.5px" width="10" height="10"><path d="M3 5.8l2-2 2 2" stroke="#333" stroke-width="1" fill="none"/></svg>
<div class="t b" style="left:866.5px;top:372.5px;">Blockhouse</div>
<div class="chk" style="left:857px;top:386.5px"></div>
<div class="t " style="left:869.5px;top:385.5px;">Enable block house offset</div>
<div class="t " style="left:856px;top:399.5px;">Face</div>
<div class="in cb" style="left:964.5px;top:398px;width:45px;height:12.5px;line-height:10.5px">1</div>
<div class="t " style="left:856px;top:413.5px;">Offset</div>
<div class="in dis" style="left:964.5px;top:412.5px;width:45px;height:12px;line-height:10px">0</div>
<div class="hd" style="top:426px"></div>
<div class="circ" style="left:854.2px;top:427px"></div>
<svg style="left:854.2px;top:427px" width="10" height="10"><path d="M3 5.8l2-2 2 2" stroke="#333" stroke-width="1" fill="none"/></svg>
<div class="t b" style="left:866.5px;top:427px;">Curvature</div>
<div class="chk" style="left:857px;top:441px"></div>
<div class="t " style="left:869.5px;top:440px;">Enable curvature</div>
<div class="t " style="left:856px;top:454px;">Face</div>
<div class="in cb" style="left:964.5px;top:452.5px;width:45px;height:12.5px;line-height:10.5px">1</div>
<div class="t " style="left:856px;top:468px;">Point 1 arc</div>
<div class="in dis" style="left:964.5px;top:467px;width:45px;height:12px;line-height:10px">0</div>
<div class="t " style="left:856px;top:481.5px;">Point 2 arc</div>
<div class="in dis" style="left:964.5px;top:481px;width:45px;height:12px;line-height:10px">0</div>
<div class="t " style="left:856px;top:495px;">Point 3 arc</div>
<div class="in dis" style="left:964.5px;top:494.5px;width:45px;height:12px;line-height:10px">0</div>
<div class="t " style="left:856px;top:509px;">Curvature dimension</div>
<div class="in dis" style="left:964.5px;top:508px;width:45px;height:12px;line-height:10px">0</div>
<div class="chk" style="left:857px;top:520px;height:3px;border-bottom:none"></div>
<svg style="left:1002px;top:402.5px" width="6" height="4"><path d="M1 1l1.5 1.5L4 1" stroke="#aaa" stroke-width=".7" fill="none"/></svg>
<svg style="left:1002px;top:457px" width="6" height="4"><path d="M1 1l1.5 1.5L4 1" stroke="#aaa" stroke-width=".7" fill="none"/></svg>
</body></html>
